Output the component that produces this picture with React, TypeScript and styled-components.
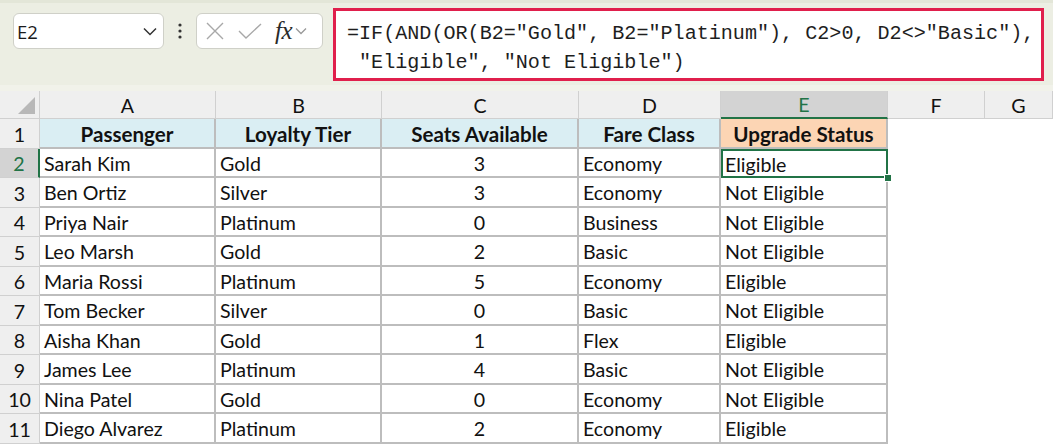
import React from 'react';
import styled, { createGlobalStyle, css } from 'styled-components';

const GlobalStyle = createGlobalStyle`
    html, body {
        margin: 0;
        padding: 0;
        background: #ffffff;
    }
    body {
        font-family: Lato, "Liberation Sans", sans-serif;
        width: 1053px;
        height: 446px;
        overflow: hidden;
    }
`;

const GREEN = '#217346';
const LINE = '#bdbdbd';
const HEAD_LINE = '#d0d0d0';

const Page = styled.div`
    width: 1053px;
    height: 446px;
    display: flex;
    flex-direction: column;
    overflow: hidden;
`;

const Toolbar = styled.div`
    height: 85px;
    flex: none;
    background: #eceee3;
    display: flex;
    align-items: flex-start;
    padding: 13px 0 0 13px;
    box-sizing: border-box;
    border-top: 3px solid #e3e6d8;
`;

const Strip = styled.div`
    height: 6px;
    flex: none;
    background: #f1f2ea;
`;

const NameBox = styled.div`
    width: 151px;
    height: 36px;
    box-sizing: border-box;
    background: #fff;
    border: 1px solid #cfd0c8;
    border-radius: 6px;
    display: flex;
    align-items: center;
    justify-content: space-between;
    padding: 0 6px 0 3px;
    margin-top: -3px;
    font-family: "Open Sans", sans-serif;
    font-size: 18.5px;
    color: #1b1b1b;
`;

const Dots = styled.div`
    width: 32px;
    height: 36px;
    margin-top: -3px;
    display: flex;
    align-items: center;
    justify-content: center;
`;

const FxBox = styled.div`
    width: 127px;
    height: 36px;
    margin-top: -3px;
    box-sizing: border-box;
    background: #fff;
    border: 1px solid #cfd0c8;
    border-radius: 6px;
    display: flex;
    align-items: center;
    padding: 0 0 0 8px;
`;

const FxText = styled.span`
    font-family: "Liberation Serif", serif;
    font-style: italic;
    font-size: 25px;
    color: #2a2a2a;
    margin-left: 12px;
    letter-spacing: -0.5px;
`;

const FormulaBox = styled.div`
    margin-left: 10px;
    margin-top: -8px;
    width: 711px;
    height: 73px;
    box-sizing: border-box;
    background: #fff;
    border: 3px solid #e01f4c;
    padding: 8px 0 0 11px;
    font-family: "Liberation Mono", monospace;
    font-size: 20.1px;
    line-height: 29px;
    color: #1e1e1e;
    white-space: pre;
`;

const Sheet = styled.div`
    display: grid;
    grid-template-columns: 40px 176px 166px 197px 142px 167px 97px 68px;
    grid-template-rows: 28px repeat(11, 29.5px);
    font-size: 19.6px;
    color: #111;
`;

const Corner = styled.div`
    background: #efefef;
    border-right: 1px solid ${HEAD_LINE};
    border-bottom: 1px solid ${HEAD_LINE};
    position: relative;
    &::after {
        content: '';
        position: absolute;
        right: 4px;
        bottom: 4px;
        width: 0;
        height: 0;
        border-left: 17px solid transparent;
        border-bottom: 17px solid #b8b8b8;
    }
`;

const ColHead = styled.div<{ $active?: boolean }>`
    background: ${(p) => (p.$active ? '#d3d3d3' : '#efefef')};
    color: ${(p) => (p.$active ? GREEN : '#111')};
    border-right: 1px solid ${HEAD_LINE};
    border-bottom: ${(p) => (p.$active ? `2px solid ${GREEN}` : `1px solid ${HEAD_LINE}`)};
    display: flex;
    align-items: center;
    justify-content: center;
    font-size: 19.6px;
    padding-top: 1px;
    box-sizing: border-box;
`;

const RowHead = styled.div<{ $active?: boolean }>`
    background: ${(p) => (p.$active ? '#d3d3d3' : '#efefef')};
    color: ${(p) => (p.$active ? GREEN : '#111')};
    border-right: ${(p) => (p.$active ? `2px solid ${GREEN}` : `1px solid ${HEAD_LINE}`)};
    border-bottom: 1px solid ${HEAD_LINE};
    display: flex;
    align-items: center;
    justify-content: center;
    padding-top: 2px;
    box-sizing: border-box;
`;

const Cell = styled.div<{ $center?: boolean; $head?: 'blue' | 'peach'; $plain?: boolean }>`
    box-sizing: border-box;
    display: flex;
    align-items: center;
    justify-content: ${(p) => (p.$center ? 'center' : 'flex-start')};
    padding: 2px 4px 0;
    white-space: nowrap;
    overflow: hidden;
    ${(p) =>
        !p.$plain &&
        css`
            border-right: 2px solid ${LINE};
            border-bottom: 2px solid ${LINE};
        `}
    ${(p) =>
        p.$head &&
        css`
            font-weight: 700;
            font-size: 20.6px;
            background: ${p.$head === 'peach' ? '#fcd5b4' : '#daeef3'};
        `}
`;

const Selected = styled(Cell)`
    position: relative;
    overflow: visible;
    border: none;
    outline: 2px solid ${GREEN};
    outline-offset: -2px;
    &::after {
        content: '';
        position: absolute;
        right: -4px;
        bottom: -4px;
        width: 6px;
        height: 6px;
        background: ${GREEN};
        border: 1px solid #fff;
    }
`;

const Chevron = () => (
    <svg width="14" height="9" viewBox="0 0 14 9" fill="none">
        <path d="M1 1.5 L7 7.5 L13 1.5" stroke="#333" strokeWidth="1.5" />
    </svg>
);

const columns = ['A', 'B', 'C', 'D', 'E', 'F', 'G'];
const headers = ['Passenger', 'Loyalty Tier', 'Seats Available', 'Fare Class', 'Upgrade Status'];

const rows: [string, string, number, string, string][] = [
    ['Sarah Kim', 'Gold', 3, 'Economy', 'Eligible'],
    ['Ben Ortiz', 'Silver', 3, 'Economy', 'Not Eligible'],
    ['Priya Nair', 'Platinum', 0, 'Business', 'Not Eligible'],
    ['Leo Marsh', 'Gold', 2, 'Basic', 'Not Eligible'],
    ['Maria Rossi', 'Platinum', 5, 'Economy', 'Eligible'],
    ['Tom Becker', 'Silver', 0, 'Basic', 'Not Eligible'],
    ['Aisha Khan', 'Gold', 1, 'Flex', 'Eligible'],
    ['James Lee', 'Platinum', 4, 'Basic', 'Not Eligible'],
    ['Nina Patel', 'Gold', 0, 'Economy', 'Not Eligible'],
    ['Diego Alvarez', 'Platinum', 2, 'Economy', 'Eligible'],
];

const App = () => {
    return (
        <Page>
            <GlobalStyle />
            <Toolbar>
                <NameBox>
                    <span>E2</span>
                    <Chevron />
                </NameBox>
                <Dots>
                    <svg width="4" height="16" viewBox="0 0 4 16">
                        <circle cx="2" cy="2" r="1.6" fill="#333" />
                        <circle cx="2" cy="8" r="1.6" fill="#333" />
                        <circle cx="2" cy="14" r="1.6" fill="#333" />
                    </svg>
                </Dots>
                <FxBox>
                    <svg width="20" height="20" viewBox="0 0 20 20">
                        <path d="M2 2 L18 18 M18 2 L2 18" stroke="#a8a8a8" strokeWidth="1.4" />
                    </svg>
                    <svg width="26" height="20" viewBox="0 0 26 20" style={{ marginLeft: 12 }}>
                        <path d="M2 10 L9 17 L24 3" stroke="#a8a8a8" strokeWidth="1.4" fill="none" />
                    </svg>
                    <FxText>fx</FxText>
                    <span style={{ marginLeft: 3, display: 'flex' }}>
                        <svg width="12" height="8" viewBox="0 0 12 8" fill="none">
                            <path d="M1 1.5 L6 6.5 L11 1.5" stroke="#999" strokeWidth="1.3" />
                        </svg>
                    </span>
                </FxBox>
                <FormulaBox>
                    {'=IF(AND(OR(B2="Gold", B2="Platinum"), C2>0, D2<>"Basic"),\n "Eligible", "Not Eligible")'}
                </FormulaBox>
            </Toolbar>
            <Strip />
            <Sheet>
                <Corner />
                {columns.map((c) => (
                    <ColHead key={c} $active={c === 'E'}>
                        {c}
                    </ColHead>
                ))}
                <RowHead>1</RowHead>
                {headers.map((h, i) => (
                    <Cell key={h} $center $head={i === 4 ? 'peach' : 'blue'}>
                        {h}
                    </Cell>
                ))}
                <Cell $plain />
                <Cell $plain />
                {rows.map((r, i) => (
                    <React.Fragment key={r[0]}>
                        <RowHead $active={i === 0}>{i + 2}</RowHead>
                        <Cell>{r[0]}</Cell>
                        <Cell>{r[1]}</Cell>
                        <Cell $center>{r[2]}</Cell>
                        <Cell>{r[3]}</Cell>
                        {i === 0 ? <Selected>{r[4]}</Selected> : <Cell>{r[4]}</Cell>}
                        <Cell $plain />
                        <Cell $plain />
                    </React.Fragment>
                ))}
            </Sheet>
        </Page>
    );
};

export default App;
